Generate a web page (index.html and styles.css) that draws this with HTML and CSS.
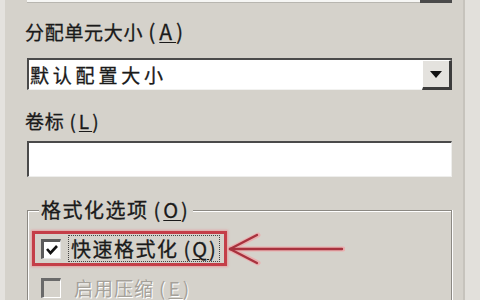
FILE: index.html
```html
<!DOCTYPE html>
<html lang="zh-CN">
<head>
    <meta charset="UTF-8">
    <title>格式化</title>
    <link rel="stylesheet" href="styles.css">
</head>
<body>
    <div class="dialog">
        <div class="prev-combo">
            <div class="prev-field"></div>
            <div class="prev-btn"></div>
        </div>

        <div class="label label-size">分配单元大小<span class="key wide">(<u>A</u>)</span></div>
        <div class="combo">
            <div class="combo-text">默认配置大小</div>
            <div class="combo-btn"><span class="arrow"></span></div>
        </div>

        <div class="label label-name">卷标<span class="key">(<u>L</u>)</span></div>
        <div class="text-field"></div>

        <fieldset class="group">
            <legend>格式化选项<span class="key">(<u>O</u>)</span></legend>
            <div class="mark-row">
                <div class="mark-box">
                    <span class="check">
                        <svg width="14" height="14" viewBox="0 0 14 14"><polyline points="2,6 5.5,10 12,3" fill="none" stroke="#111" stroke-width="2.6"/></svg>
                    </span>
                    <span class="focus">快速格式化<span class="key">(<u>Q</u>)</span></span>
                </div>
                <svg class="pointer" width="118" height="34" viewBox="0 0 118 34">
                    <g fill="none" stroke-linecap="round" stroke="#f2a2a6" stroke-width="5" opacity="0.7">
                        <line x1="3" y1="17" x2="116" y2="17"/>
                        <line x1="3" y1="17" x2="31" y2="3"/>
                        <line x1="3" y1="17" x2="31" y2="31"/>
                    </g>
                    <g fill="none" stroke-linecap="round" stroke="#a8323e" stroke-width="2.4">
                        <line x1="3" y1="17" x2="115" y2="17"/>
                        <line x1="3" y1="17" x2="30" y2="3"/>
                        <line x1="3" y1="17" x2="30" y2="31"/>
                    </g>
                </svg>
            </div>
            <div class="option disabled">
                <span class="check off"></span>
                <span>启用压缩<span class="key">(<u>E</u>)</span></span>
            </div>
        </fieldset>
    </div>
</body>
</html>
```

FILE: styles.css
```css
body {
    margin: 0;
    background-color: #e2e0db;
    font-family: "Noto Sans CJK SC", "Noto Sans", sans-serif;
    color: #1a1a1a;
    overflow: hidden;
}
u {
    text-decoration-thickness: 1px;
    text-underline-offset: 2px;
}
.key {
    margin-left: 5px;
    letter-spacing: 3px;
}
.key.wide {
    margin-left: 5px;
    font-size: 21px;
    letter-spacing: 4px;
}
.dialog {
    box-sizing: border-box;
    width: 465px;
    height: 300px;
    background: #d5d2cb;
    border-left: 5px solid #e4e2de;
    border-right: 2px solid #c6c3bc;
    padding: 0 11px 0 22px;
    -webkit-text-stroke: 0.3px;
}
.prev-combo {
    display: flex;
    height: 3px;
}
.prev-field {
    flex: 1;
    background: #f6f6f4;
    border-bottom: 1px solid #b8b6b0;
}
.prev-btn {
    width: 32px;
    background: #4a4a4a;
}
.label {
    font-size: 19px;
    line-height: 24px;
    letter-spacing: 0.7px;
    margin-left: -2px;
}
.label-size {
    margin-top: 16px;
}
.label-name {
    margin-top: 19px;
}
.combo {
    box-sizing: border-box;
    display: flex;
    height: 32px;
    margin-top: 14px;
    border-top: 2px solid #4a4a4a;
    border-left: 2px solid #4a4a4a;
    border-bottom: 1px solid #f2f2f0;
}
.combo-text {
    flex: 1;
    background: #ffffff;
    font-size: 19px;
    line-height: 29px;
    letter-spacing: 3.8px;
    padding-left: 1px;
}
.combo-btn {
    box-sizing: border-box;
    width: 30px;
    background: #e4e2de;
    border-top: 1px solid #ffffff;
    border-left: 1px solid #ffffff;
    border-right: 3px solid #3c3c3c;
    border-bottom: 3px solid #3c3c3c;
    margin-bottom: -1px;
    display: flex;
    justify-content: center;
    align-items: center;
}
.arrow {
    width: 0;
    height: 0;
    border-left: 6px solid transparent;
    border-right: 6px solid transparent;
    border-top: 7px solid #111;
}
.text-field {
    box-sizing: border-box;
    height: 36px;
    margin-top: 8px;
    background: #ffffff;
    border-top: 2px solid #4a4a4a;
    border-left: 2px solid #4a4a4a;
    border-right: 1px solid #eeeeec;
    border-bottom: 1px solid #eeeeec;
}
.group {
    margin: 21px 0 0 0;
    padding: 9px 0 0 4px;
    border: 1px solid #8c8983;
    border-bottom: none;
    box-shadow: inset 1px 1px 0 #ffffff, 1px 0 0 #ffffff;
    min-inline-size: 0;
}
.group legend {
    margin-left: 7px;
    padding: 0 2px;
    background: #d5d2cb;
    font-size: 20px;
    line-height: 24px;
    letter-spacing: 1.5px;
}
.mark-row {
    display: flex;
    align-items: center;
}
.mark-box {
    box-sizing: border-box;
    height: 35px;
    display: flex;
    align-items: center;
    padding: 0 4px 0 6px;
    border: 3px solid #c43e48;
    box-shadow: 0 0 2px 1px rgba(240, 130, 135, 0.6);
}
.check {
    box-sizing: border-box;
    width: 20px;
    height: 20px;
    background: #ffffff;
    border-top: 3px solid #5a5a5a;
    border-left: 3px solid #5a5a5a;
    border-right: 1px solid #e8e8e8;
    border-bottom: 1px solid #e8e8e8;
    display: flex;
    justify-content: center;
    align-items: center;
    margin-right: 7px;
}
.check.off {
    background: #d5d2cb;
    border-color: #6a6a6a #ffffff #ffffff #6a6a6a;
}
.focus {
    border: 1px dotted #444;
    padding: 0 1px 0 2px;
    font-size: 20px;
    line-height: 25px;
    letter-spacing: 1.5px;
}
.focus .key {
    letter-spacing: 2px;
}
.option {
    display: flex;
    align-items: center;
    margin-top: 10px;
    padding-left: 9px;
    font-size: 19px;
    line-height: 24px;
    letter-spacing: 1px;
}
.option.disabled {
    color: #a5a19a;
    text-shadow: 1px 1px 0 #ffffff;
    -webkit-text-stroke: 0;
}
.option .check {
    margin-right: 13px;
}
```
